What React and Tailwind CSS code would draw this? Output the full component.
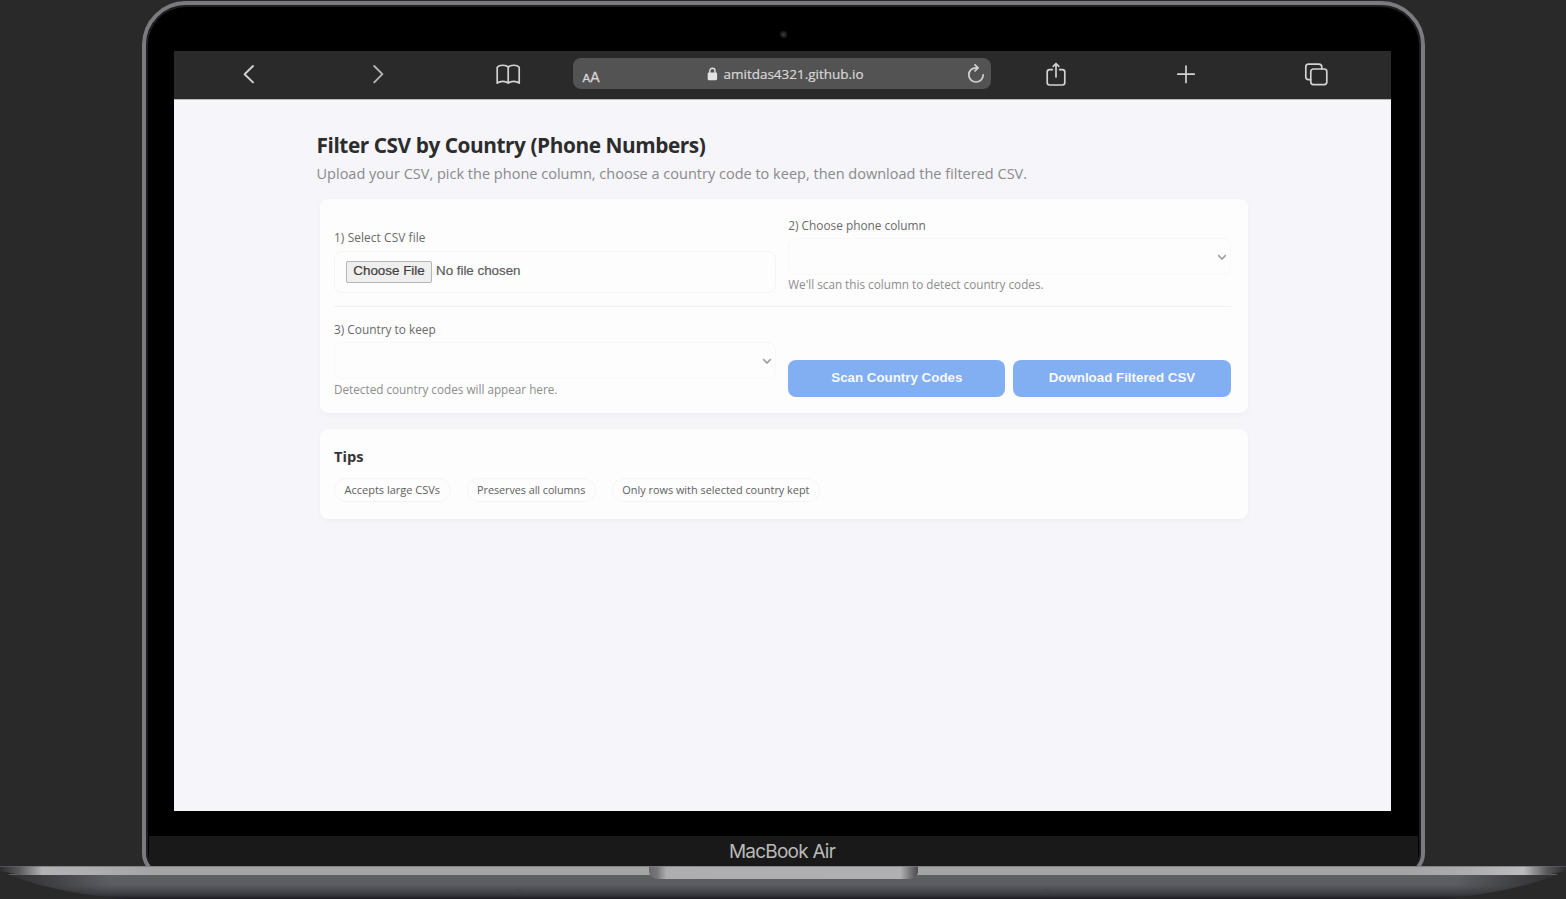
import React from 'react';

const ui = "font-['Open_Sans','Noto_Sans',sans-serif]";
const arial = "font-['Liberation_Sans',Arial,sans-serif]";

function Icon({ children, className = '', size = 26, sw = 1.7 }) {
  return (
    <svg
      width={size}
      height={size}
      viewBox={`0 0 ${size} ${size}`}
      fill="none"
      stroke="#d2d2d2"
      strokeWidth={sw}
      strokeLinecap="round"
      strokeLinejoin="round"
      className={'shrink-0 ' + className}
    >
      {children}
    </svg>
  );
}

function Toolbar() {
  return (
    <div className="flex h-[48px] shrink-0 items-center bg-[#2a2a2a] pt-[1px] pb-[4px]">
      <Icon className="ml-[62px]" sw={1.9}>
        <path d="M17 5 L8.6 13.2 L17 21.4" />
      </Icon>
      <Icon className="ml-[103px]" sw={1.9}>
        <path d="M9.2 5 L17.4 13.2 L9.2 21.4" stroke="#b4b4b4" />
      </Icon>
      <Icon className="ml-[104px]" sw={1.7}>
        <path d="M13.2 6.2 C11.4 3.8 4.4 3.4 2.2 6.2 V22.2 C4.8 19.8 10.8 19.8 13.2 22.2 C15.6 19.8 21.6 19.8 24.2 22.2 V6.2 C22 3.4 15 3.8 13.2 6.2 Z M13.2 6.2 V22" />
      </Icon>
      <div className="ml-[52.5px] flex h-[31px] w-[418px] items-center rounded-[8px] bg-[#535353] text-[#d8d8d8]">
        <div className={`${arial} ml-[9.5px] flex w-[26px] items-baseline pt-[7px] leading-none`}>
          <span className="text-[11.5px] [-webkit-text-stroke:0.3px]">A</span>
          <span className="text-[14px] [-webkit-text-stroke:0.3px]">A</span>
        </div>
        <svg width="11" height="14" viewBox="0 0 11 14" className="ml-[98px] shrink-0">
          <path d="M2.8 6 V3.8 a2.6 2.6 0 0 1 5.2 0 V6" fill="none" stroke="#e2e2e2" strokeWidth="1.4" />
          <rect x="0.7" y="5.6" width="9.4" height="7.6" rx="1.2" fill="#e2e2e2" />
        </svg>
        <span className={`${ui} ml-[6px] w-[140px] text-[13.5px] leading-[20px] tracking-[-0.01px] whitespace-nowrap [-webkit-text-stroke:0.2px]`}>
          amitdas4321.github.io
        </span>
        <Icon size={20} className="ml-[102px]" sw={1.7}>
          <path d="M10.5 3.8 C6 3.6 2.8 6.8 2.8 10.8 C2.8 14.8 6 18 10 18 C14 18 17.2 14.8 17.2 10.8 M9 0.9 L12.1 3.9 L9 7" />
        </Icon>
      </div>
      <Icon className="ml-[52px]" sw={1.7}>
        <path d="M9.4 8.6 H6.6 Q4.2 8.6 4.2 11 V21.6 Q4.2 24 6.6 24 H19.4 Q21.8 24 21.8 21.6 V11 Q21.8 8.6 19.4 8.6 H16.6 M13 16 V3 M10.2 5.3 L13 2.5 L15.8 5.3" />
      </Icon>
      <Icon className="ml-[104px]">
        <path d="M13 5 V21.4 M4.8 13.2 H21.2" />
      </Icon>
      <Icon className="ml-[104px]" sw={1.7}>
        <rect x="7.8" y="8" width="16" height="15.6" rx="2.6" />
        <path d="M7.6 18.6 H5.4 Q2.8 18.6 2.8 16 V5.8 Q2.8 3.2 5.4 3.2 H15.8 Q18.8 3.2 18.8 6 V7.8" />
      </Icon>
    </div>
  );
}

function Chevron() {
  return (
    <svg width="10" height="7" viewBox="0 0 10 7" fill="none" stroke="#a0a0a0" strokeWidth="1.7" className="mt-[2px] shrink-0">
      <path d="M1.2 1.2 L5 5 L8.8 1.2" />
    </svg>
  );
}

function Select() {
  return (
    <div className="flex h-[37px] items-center justify-end rounded-[8px] border border-[#f8f8fa] pr-[3px]">
      <Chevron />
    </div>
  );
}

const labelText = 'text-[11.85px] leading-[16px] text-[#6a6a6a] whitespace-nowrap';
const helpText = 'text-[11.73px] leading-[16px] text-[#8d8d8d] whitespace-nowrap';
const button = `${arial} flex h-[37px] flex-1 items-center justify-center rounded-[8px] bg-[#82aff1] pb-[2px] text-[13.33px] font-bold text-[#f6f9ff]`;
const pill = 'flex h-[24px] items-center rounded-full border border-[#f5f5f7] px-[9.5px] text-[#606060] whitespace-nowrap';

function FilterCard() {
  return (
    <section className="ml-[3px] h-[214px] w-[928px] rounded-[8px] bg-[#fdfdfd] pt-[18px] pr-[17px] pl-[14.5px] shadow-[0_2px_6px_rgba(0,0,0,0.035)]">
      <div className="grid h-[90px] grid-cols-2 gap-[12px] border-b border-[#f1f1f4]">
        <div className="pt-[12px]">
          <div className={labelText + ' tracking-[0.1px]'}>1) Select CSV file</div>
          <div className="mt-[6px] flex h-[42px] items-center rounded-[8px] border border-[#f4f4f6] pb-[1px] pl-[11px]">
            <button className={`${arial} flex h-[22px] w-[86px] items-center justify-center rounded-[2px] border border-[#b5b5b5] bg-[#efefef] pb-[1px] text-[13.4px] text-[#404040] [-webkit-text-stroke:0.2px]`}>
              Choose File
            </button>
            <span className={`${arial} ml-[4px] pb-[1px] text-[13.33px] text-[#5c5c5c] [-webkit-text-stroke:0.2px]`}>No file chosen</span>
          </div>
        </div>
        <div>
          <div className={labelText}>2) Choose phone column</div>
          <div className="mt-[5px]">
            <Select />
          </div>
          <div className={helpText + ' mt-[1px]'}>We'll scan this column to detect country codes.</div>
        </div>
      </div>
      <div className="grid grid-cols-2 gap-[12px] pt-[14px]">
        <div>
          <div className={labelText}>3) Country to keep</div>
          <div className="mt-[5px]">
            <Select />
          </div>
          <div className={helpText + ' mt-[2px]'}>Detected country codes will appear here.</div>
        </div>
        <div className="flex gap-[8px] pt-[39px]">
          <button className={button}>Scan Country Codes</button>
          <button className={button}>Download Filtered CSV</button>
        </div>
      </div>
    </section>
  );
}

function TipsCard() {
  return (
    <section className="mt-[16px] ml-[3px] h-[90px] w-[928px] rounded-[8px] bg-[#fdfdfd] pt-[17px] pl-[14.5px] shadow-[0_2px_6px_rgba(0,0,0,0.035)]">
      <h2 className="text-[14.6px] leading-[20px] font-bold text-[#353535]">Tips</h2>
      <div className="mt-[12px] flex gap-[16px]">
        <span className={pill + ' text-[11px]'}>Accepts large CSVs</span>
        <span className={pill + ' text-[10.8px] tracking-[-0.04px]'}>Preserves all columns</span>
        <span className={pill + ' text-[10.9px]'}>Only rows with selected country kept</span>
      </div>
    </section>
  );
}

function Base() {
  return (
    <svg width="1566" height="33" viewBox="0 0 1566 33" className="relative block shrink-0">
      <defs>
        <linearGradient id="body" x1="0" y1="0" x2="0" y2="1">
          <stop offset="0" stopColor="#5f6063" />
          <stop offset="0.45" stopColor="#5a5b61" />
          <stop offset="0.8" stopColor="#3d3e44" />
          <stop offset="1" stopColor="#1b1a20" />
        </linearGradient>
        <linearGradient id="edge" x1="0" y1="0" x2="1" y2="0">
          <stop offset="0" stopColor="#2c2c2e" />
          <stop offset="0.012" stopColor="#58585b" />
          <stop offset="0.027" stopColor="#b2b2b6" />
          <stop offset="0.06" stopColor="#aeaeb2" />
          <stop offset="0.1" stopColor="#a4a4a5" />
          <stop offset="0.9" stopColor="#a4a4a5" />
          <stop offset="0.94" stopColor="#aeaeb2" />
          <stop offset="0.973" stopColor="#bcbcc0" />
          <stop offset="0.988" stopColor="#58585b" />
          <stop offset="1" stopColor="#2c2c2e" />
        </linearGradient>
        <linearGradient id="notch" x1="0" y1="0" x2="1" y2="0">
          <stop offset="0" stopColor="#69696b" />
          <stop offset="0.03" stopColor="#77777a" />
          <stop offset="0.065" stopColor="#aeaeb1" />
          <stop offset="0.935" stopColor="#b0b0b3" />
          <stop offset="0.97" stopColor="#77777a" />
          <stop offset="1" stopColor="#4b4b4d" />
        </linearGradient>
        <linearGradient id="fadeL" x1="0" y1="0" x2="1" y2="0">
          <stop offset="0" stopColor="#29292a" />
          <stop offset="1" stopColor="#29292a" stopOpacity="0" />
        </linearGradient>
        <linearGradient id="fadeR" x1="0" y1="0" x2="1" y2="0">
          <stop offset="0" stopColor="#29292a" stopOpacity="0" />
          <stop offset="1" stopColor="#29292a" />
        </linearGradient>
      </defs>
      <rect width="1566" height="33" fill="#29292a" />
      <path d="M8 8 C30 18 75 29 125 33 H1441 C1491 29 1536 18 1558 8 Z" fill="url(#body)" />
      <rect x="0" y="9" width="110" height="24" fill="url(#fadeL)" />
      <rect x="1456" y="9" width="110" height="24" fill="url(#fadeR)" />
      <path d="M0 0 H1566 V5 L1545 9 H21 L0 5 Z" fill="url(#edge)" />
      <rect y="0" width="1566" height="1" fill="#666668" opacity="0.55" />
      <path d="M649 0 H918 V6 Q917 13 908 13 H659 Q650 13 649 6 Z" fill="url(#notch)" />
      <rect x="649" y="0" width="269" height="1" fill="#7a7a7c" opacity="0.7" />
      <rect x="517" y="23" width="5" height="2" rx="1" fill="#46464b" />
      <rect x="1045" y="23" width="5" height="2" rx="1" fill="#46464b" />
    </svg>
  );
}

export default function App() {
  return (
    <div className={`${ui} flex h-[899px] w-[1566px] flex-col items-center overflow-hidden bg-[#292929]`}>
      <div className="flex h-[866px] w-full shrink-0 justify-center overflow-hidden pt-[1px]">
        <div className="flex h-[876px] w-[1283px] shrink-0 flex-col rounded-t-[44px] rounded-b-[24px] border-[4px] border-[#7b7b7e] bg-black shadow-[inset_0_0_0_2px_#1e1e20]">
          <div className="flex h-[46px] shrink-0 items-center justify-center pt-[12px]">
            <div className="flex h-[7px] w-[7px] items-center justify-center rounded-full bg-[#1d1d1d]">
              <div className="h-[3px] w-[3px] rounded-full bg-[#3a3a3a]" />
            </div>
          </div>
          <main className="ml-[28px] flex h-[760px] w-[1217px] shrink-0 flex-col bg-[#f5f5fa]">
            <Toolbar />
            <div className="border-t border-[#b9b9bb] pt-[31px] pl-[143px]">
              <h1 className="text-[20.8px] leading-[28px] font-bold tracking-[-0.43px] text-[#2c2c2c]">
                Filter CSV by Country (Phone Numbers)
              </h1>
              <p className="mt-[4px] mb-[16px] text-[14.53px] leading-[20px] text-[#8a8a8b]">
                Upload your CSV, pick the phone column, choose a country code to keep, then download the filtered CSV.
              </p>
              <FilterCard />
              <TipsCard />
            </div>
          </main>
          <div className="mx-[3px] mt-[25px] flex h-[38px] shrink-0 justify-center rounded-b-[16px] bg-[#191919]">
            <span className="mr-[2px] font-['Inter',sans-serif] text-[19px] leading-[32px] tracking-[-0.78px] text-[#b9b9b9]">
              MacBook Air
            </span>
          </div>
        </div>
      </div>
      <Base />
    </div>
  );
}
